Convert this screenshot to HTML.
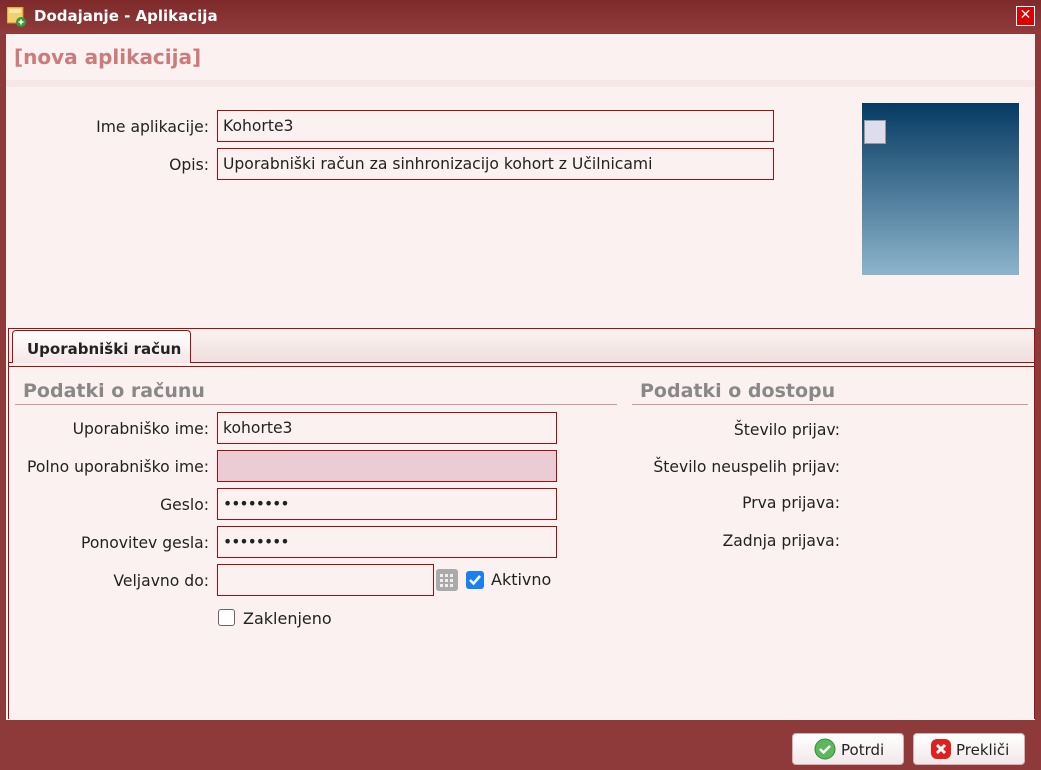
<!DOCTYPE html>
<html><head><meta charset="utf-8"><style>
*{box-sizing:border-box;margin:0;padding:0}
body{width:1041px;height:770px;background:#8e3a3a;font-family:"DejaVu Sans",sans-serif;position:relative;overflow:hidden}
.abs{position:absolute}
.title{left:0;top:0;width:1041px;height:34px;background:linear-gradient(#7e2a2a,#903c3c)}
.title span{position:absolute;left:34px;top:7px;color:#fff;font-weight:bold;font-size:15px}
.content{left:6px;top:34px;width:1029px;height:686px;background:#fbf1f1}
.lbl{position:absolute;font-size:15.6px;color:#222;text-align:right;width:200px}
.inp{position:absolute;border:1px solid #a01010;background:#fbf1f1;font-size:15.6px;color:#222;padding:6px 5px;height:32px;line-height:18px}
.sec{position:absolute;font-size:19px;font-weight:bold;color:#888}
.btn{position:absolute;top:733px;height:32px;border:1px solid #d8b0b0;border-radius:4px;background:linear-gradient(#fff,#f2e8e8);font-size:15px;color:#222;padding:7px 0 0 48px}
</style></head><body>
<div class="abs title"><svg class="abs" style="left:7px;top:7px" width="20" height="20"><rect x="0" y="0" width="16" height="16" fill="#f2cf70" stroke="#c89020"/><rect x="2" y="2" width="12" height="4" fill="#fae6a0"/><circle cx="14" cy="15" r="5" fill="#3a9a3a"/><path d="M11.5 15h5M14 12.5v5" stroke="#fff" stroke-width="1.6"/></svg><span>Dodajanje - Aplikacija</span>
<div class="abs" style="left:1016px;top:6px;width:19px;height:20px;background:#d00;border:1px solid #fff;color:#fff;font-weight:bold;font-size:14px;text-align:center;line-height:17px">✕</div></div>
<div class="abs content"></div>
<div class="abs" style="left:6px;top:80px;width:1029px;height:7px;background:#f7e6e6"></div>
<div class="abs" style="left:14px;top:45px;font-size:20px;font-weight:bold;color:#cc7a7a">[nova aplikacija]</div>
<div class="lbl" style="left:9px;top:118px">Ime aplikacije:</div>
<div class="inp" style="left:217px;top:110px;width:557px">Kohorte3</div>
<div class="lbl" style="left:9px;top:156px">Opis:</div>
<div class="inp" style="left:217px;top:148px;width:557px">Uporabniški račun za sinhronizacijo kohort z Učilnicami</div>
<div class="abs" style="left:862px;top:103px;width:157px;height:172px;background:linear-gradient(#053a62,#8db4cc)"></div>
<div class="abs" style="left:864px;top:120px;width:22px;height:24px;background:#dde;border:1px solid #999"></div>
<div class="abs" style="left:8px;top:328px;width:1027px;height:391px;border:1px solid #a01010;border-bottom:none;background:#fbf1f1"></div>
<div class="abs" style="left:9px;top:329px;width:1025px;height:34px;background:linear-gradient(#fbf1f1,#f0dede)"></div>
<div class="abs" style="left:9px;top:362px;width:1025px;height:5px;border-top:1px solid #a01010;border-bottom:1px solid #a01010"></div>
<div class="abs" style="left:12px;top:330px;width:179px;height:33px;border:1px solid #a01010;border-bottom:none;border-radius:4px 4px 0 0;background:linear-gradient(#fff,#f5e6e6);font-weight:bold;font-size:15px;color:#222;padding:9px 0 0 14px">Uporabniški račun</div>
<div class="sec" style="left:23px;top:380px">Podatki o računu</div>
<div class="abs" style="left:15px;top:404px;width:602px;height:1px;background:#c89a9a"></div>
<div class="sec" style="left:640px;top:380px">Podatki o dostopu</div>
<div class="abs" style="left:632px;top:404px;width:396px;height:1px;background:#c89a9a"></div>
<div class="lbl" style="left:9px;top:420px">Uporabniško ime:</div>
<div class="inp" style="left:217px;top:412px;width:340px">kohorte3</div>
<div class="lbl" style="left:9px;top:458px">Polno uporabniško ime:</div>
<div class="inp" style="left:217px;top:450px;width:340px;background:#ecccd4"></div>
<div class="lbl" style="left:9px;top:496px">Geslo:</div>
<div class="inp" style="left:217px;top:488px;width:340px;letter-spacing:-1px">••••••••</div>
<div class="lbl" style="left:9px;top:534px">Ponovitev gesla:</div>
<div class="inp" style="left:217px;top:526px;width:340px;letter-spacing:-1px">••••••••</div>
<div class="lbl" style="left:9px;top:572px">Veljavno do:</div>
<div class="inp" style="left:217px;top:564px;width:217px"></div>
<svg class="abs" style="left:436px;top:569px" width="22" height="22"><rect x="0" y="0" width="22" height="22" rx="3" fill="#aaa"/><g fill="#eee"><rect x="4" y="5" width="3" height="3"/><rect x="9" y="5" width="3" height="3"/><rect x="14" y="5" width="3" height="3"/><rect x="4" y="10" width="3" height="3"/><rect x="9" y="10" width="3" height="3"/><rect x="14" y="10" width="3" height="3"/><rect x="4" y="15" width="3" height="3"/><rect x="9" y="15" width="3" height="3"/><rect x="14" y="15" width="3" height="3"/></g></svg>
<svg class="abs" style="left:466px;top:571px" width="18" height="18"><rect width="18" height="18" rx="3" fill="#1a7ff0"/><path d="M4 9l3.5 3.5L14 5" stroke="#fff" stroke-width="2.5" fill="none"/></svg>
<div class="abs" style="left:491px;top:570px;font-size:16px;color:#222">Aktivno</div>
<div class="abs" style="left:218px;top:609px;width:17px;height:17px;border:1.5px solid #666;border-radius:3px;background:#fff"></div>
<div class="abs" style="left:243px;top:609px;font-size:16px;color:#222">Zaklenjeno</div>
<div class="lbl" style="left:640px;top:421px">Število prijav:</div>
<div class="lbl" style="left:640px;top:458px">Število neuspelih prijav:</div>
<div class="lbl" style="left:640px;top:494px">Prva prijava:</div>
<div class="lbl" style="left:640px;top:532px">Zadnja prijava:</div>
<div class="btn" style="left:792px;width:112px">Potrdi</div>
<svg class="abs" style="left:814px;top:738px" width="22" height="22"><circle cx="11" cy="11" r="10" fill="#5cb85c" stroke="#3a8a3a"/><path d="M6 11l3.5 3.5L16 8" stroke="#fff" stroke-width="2.5" fill="none"/></svg>
<div class="btn" style="left:913px;width:112px;padding-left:42px">Prekliči</div>
<svg class="abs" style="left:930px;top:738px" width="22" height="22"><rect x="1" y="1" width="20" height="20" rx="6" fill="#e02020"/><path d="M7 7l8 8M15 7l-8 8" stroke="#fff" stroke-width="3"/></svg>
</body></html>
